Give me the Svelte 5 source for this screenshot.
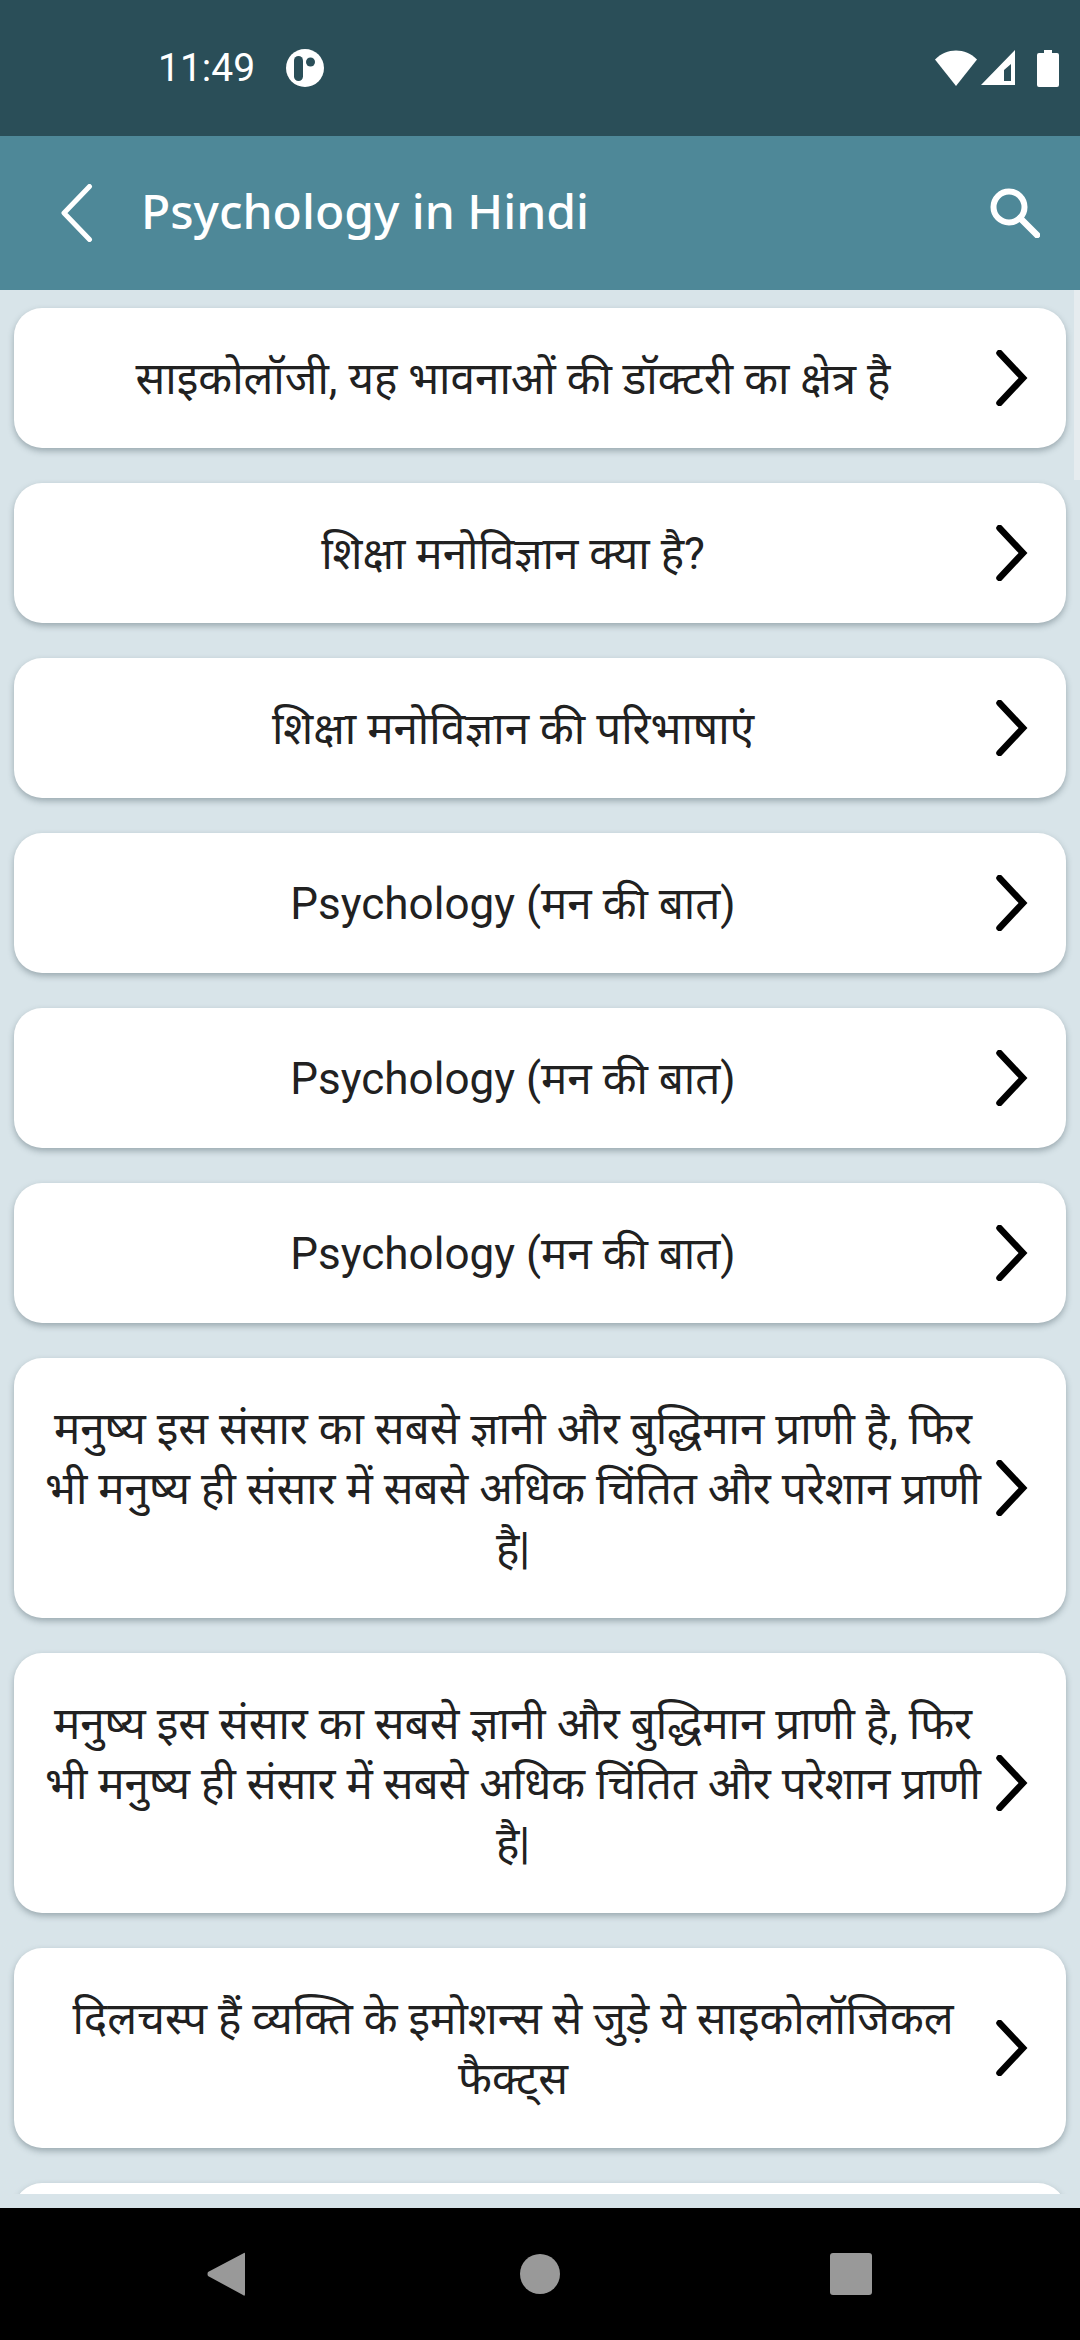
<script>
    // last row is only peeking in above the nav bar, its text is scrolled out of view
    const items = [
        "साइकोलॉजी, यह भावनाओं की डॉक्टरी का क्षेत्र है",
        "शिक्षा मनोविज्ञान क्या है?",
        "शिक्षा मनोविज्ञान की परिभाषाएं",
        "Psychology (मन की बात)",
        "Psychology (मन की बात)",
        "Psychology (मन की बात)",
        "मनुष्य इस संसार का सबसे ज्ञानी और बुद्धिमान प्राणी है, फिर भी मनुष्य ही संसार में सबसे अधिक चिंतित और परेशान प्राणी है|",
        "मनुष्य इस संसार का सबसे ज्ञानी और बुद्धिमान प्राणी है, फिर भी मनुष्य ही संसार में सबसे अधिक चिंतित और परेशान प्राणी है|",
        "दिलचस्प हैं व्यक्ति के इमोशन्स से जुड़े ये साइकोलॉजिकल फैक्ट्स"
    ];
</script>

<div class="screen">
    <div class="status">
        <span class="time">11:49</span>
        <svg class="app-dot" width="38" height="38" viewBox="0 0 38 38">
            <circle cx="19" cy="19" r="19" fill="#fff" />
            <rect x="8" y="7" width="9" height="25" rx="4.5" fill="#2a4e58" />
            <circle cx="24.500" cy="13" r="4.500" fill="#2a4e58" />
        </svg>
        <div class="status-icons">
            <svg width="42" height="36" viewBox="0 0 42 36">
                <path d="M0 9.500C11.500 -2.500 30.500 -2.500 42 9.500L21 36z" fill="#fff" />
            </svg>
            <svg width="34" height="36" viewBox="0 0 34 36">
                <path fill-rule="evenodd" d="M34 0V35H0zM30 14L23 20V31H30z" fill="#fff" />
            </svg>
            <svg class="battery" width="22" height="37" viewBox="0 0 22 37">
                <path d="M7 0H15V3H20Q22 3 22 5V35Q22 37 20 37H2Q0 37 0 35V5Q0 3 2 3H7z" fill="#fff" />
            </svg>
        </div>
    </div>

    <header class="appbar">
        <svg class="back" width="34" height="58" viewBox="0 0 34 58" fill="none">
            <path d="M28.500 2.500L3 29L28.500 55.500" stroke="#fff" stroke-width="5" stroke-linecap="round" stroke-linejoin="round" />
        </svg>
        <span class="title">Psychology in Hindi</span>
        <svg class="search" width="50" height="50" viewBox="0 0 50 50" fill="none">
            <circle cx="19" cy="19" r="15.500" stroke="#fff" stroke-width="6" />
            <path d="M30 30L47 47" stroke="#fff" stroke-width="6.500" stroke-linecap="round" />
        </svg>
    </header>

    <main class="list-wrap">
        <div class="list">
            {#each items as item}
                <div class="card">
                    <div class="label">{item}</div>
                    <svg class="chev" width="32" height="56" viewBox="0 0 32 56" fill="none">
                        <path d="M3.500 3L27 28L3.500 53" stroke="#000" stroke-width="6.500" stroke-linecap="round" stroke-linejoin="miter" />
                    </svg>
                </div>
            {/each}
            <div class="card empty"></div>
        </div>
        <div class="scrollbar"></div>
    </main>

    <nav class="navbar">
        <svg width="38" height="46" viewBox="0 0 38 46">
            <path d="M37 2Q38 1 38 3V43Q38 46 36 44L1 25Q0 23 1 21z" fill="#999" />
        </svg>
        <svg class="home" width="40" height="40" viewBox="0 0 40 40">
            <circle cx="20" cy="20" r="20" fill="#999" />
        </svg>
        <svg width="42" height="42" viewBox="0 0 42 42">
            <rect width="42" height="42" rx="3" fill="#999" />
        </svg>
    </nav>
</div>

<style>
    :global(body) {
        margin: 0;
    }
    .screen {
        width: 1080px;
        height: 2340px;
        display: flex;
        flex-direction: column;
        background: #d8e4e9;
        font-family: Roboto, "Noto Sans", "Noto Sans Devanagari", sans-serif;
    }
    .status {
        height: 136px;
        box-sizing: border-box;
        background: #2a4e58;
        display: flex;
        align-items: center;
        padding: 0 21px 0 158px;
        color: #fff;
    }
    .time {
        font-size: 39px;
        width: 128px;
    }
    .status-icons {
        margin-left: auto;
        display: flex;
        align-items: center;
        gap: 4px;
    }
    .battery {
        margin-left: 18px;
    }
    .appbar {
        height: 154px;
        box-sizing: border-box;
        background: #4e8898;
        display: flex;
        align-items: center;
        padding: 0 40px 0 61px;
        color: #fff;
    }
    .title {
        font-family: "Noto Sans", sans-serif;
        font-size: 48px;
        font-weight: 500;
        margin-left: 46px;
        position: relative;
        top: -3px;
    }
    .search {
        margin-left: auto;
    }
    .list-wrap {
        position: relative;
        flex: 1;
        min-height: 0;
        box-sizing: border-box;
        padding-bottom: 14px;
    }
    .list {
        height: 100%;
        overflow: hidden;
        padding: 18px 14px 0;
        box-sizing: border-box;
        display: flex;
        flex-direction: column;
        gap: 35px;
    }
    .card {
        flex: none;
        background: #fff;
        border-radius: 28px;
        box-shadow: 0 3px 6px rgba(40, 60, 70, 0.35);
        display: flex;
        align-items: center;
        padding: 40px 38px 40px 24px;
    }
    .card.empty {
        height: 140px;
        box-sizing: border-box;
    }
    .label {
        flex: 1;
        padding: 1px 8px 0 0;
        margin-bottom: -1px;
        text-align: center;
        font-size: 44px;
        line-height: 60px;
        color: #212121;
    }
    .scrollbar {
        position: absolute;
        top: 0;
        right: 0;
        width: 6px;
        height: 190px;
        background: #e6ecef;
    }
    .navbar {
        height: 132px;
        background: #000;
        display: flex;
        align-items: center;
        justify-content: space-between;
        padding: 0 208px 0 207px;
    }
    .home {
        margin-left: 5px;
    }
</style>
